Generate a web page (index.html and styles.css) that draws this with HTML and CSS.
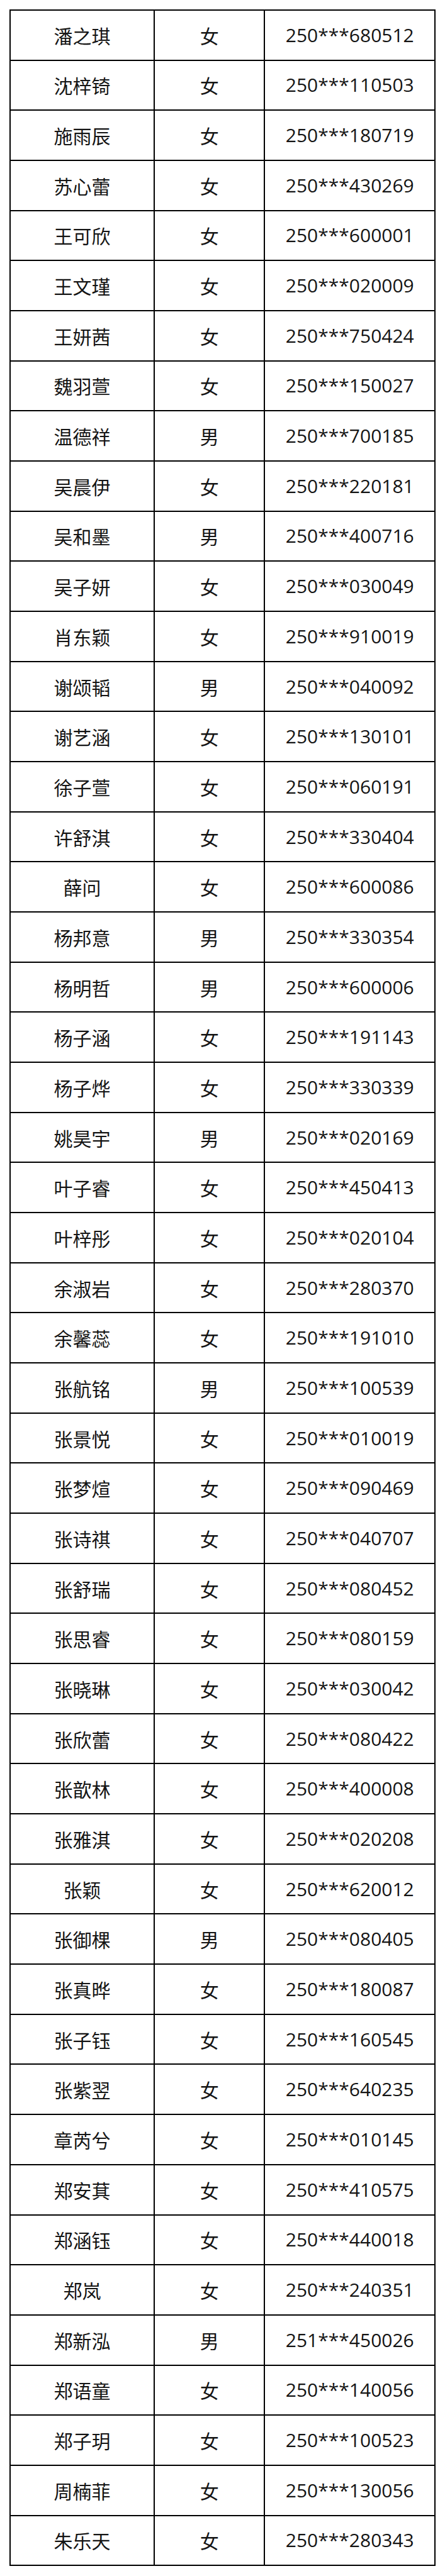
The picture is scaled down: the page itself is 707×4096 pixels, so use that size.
FILE: index.html
```html
<!DOCTYPE html>
<html lang="zh">
<head>
<meta charset="utf-8">
<title>名单</title>
<link rel="stylesheet" href="styles.css">
</head>
<body>
<div class="sheet">
<div class="c name">潘之琪</div><div class="c sex">女</div><div class="c id">250***680512</div>
<div class="c name">沈梓锜</div><div class="c sex">女</div><div class="c id">250***110503</div>
<div class="c name">施雨辰</div><div class="c sex">女</div><div class="c id">250***180719</div>
<div class="c name">苏心蕾</div><div class="c sex">女</div><div class="c id">250***430269</div>
<div class="c name">王可欣</div><div class="c sex">女</div><div class="c id">250***600001</div>
<div class="c name">王文瑾</div><div class="c sex">女</div><div class="c id">250***020009</div>
<div class="c name">王妍茜</div><div class="c sex">女</div><div class="c id">250***750424</div>
<div class="c name">魏羽萱</div><div class="c sex">女</div><div class="c id">250***150027</div>
<div class="c name">温德祥</div><div class="c sex">男</div><div class="c id">250***700185</div>
<div class="c name">吴晨伊</div><div class="c sex">女</div><div class="c id">250***220181</div>
<div class="c name">吴和墨</div><div class="c sex">男</div><div class="c id">250***400716</div>
<div class="c name">吴子妍</div><div class="c sex">女</div><div class="c id">250***030049</div>
<div class="c name">肖东颖</div><div class="c sex">女</div><div class="c id">250***910019</div>
<div class="c name">谢颂韬</div><div class="c sex">男</div><div class="c id">250***040092</div>
<div class="c name">谢艺涵</div><div class="c sex">女</div><div class="c id">250***130101</div>
<div class="c name">徐子萱</div><div class="c sex">女</div><div class="c id">250***060191</div>
<div class="c name">许舒淇</div><div class="c sex">女</div><div class="c id">250***330404</div>
<div class="c name">薛问</div><div class="c sex">女</div><div class="c id">250***600086</div>
<div class="c name">杨邦意</div><div class="c sex">男</div><div class="c id">250***330354</div>
<div class="c name">杨明哲</div><div class="c sex">男</div><div class="c id">250***600006</div>
<div class="c name">杨子涵</div><div class="c sex">女</div><div class="c id">250***191143</div>
<div class="c name">杨子烨</div><div class="c sex">女</div><div class="c id">250***330339</div>
<div class="c name">姚昊宇</div><div class="c sex">男</div><div class="c id">250***020169</div>
<div class="c name">叶子睿</div><div class="c sex">女</div><div class="c id">250***450413</div>
<div class="c name">叶梓彤</div><div class="c sex">女</div><div class="c id">250***020104</div>
<div class="c name">余淑岩</div><div class="c sex">女</div><div class="c id">250***280370</div>
<div class="c name">余馨蕊</div><div class="c sex">女</div><div class="c id">250***191010</div>
<div class="c name">张航铭</div><div class="c sex">男</div><div class="c id">250***100539</div>
<div class="c name">张景悦</div><div class="c sex">女</div><div class="c id">250***010019</div>
<div class="c name">张梦煊</div><div class="c sex">女</div><div class="c id">250***090469</div>
<div class="c name">张诗祺</div><div class="c sex">女</div><div class="c id">250***040707</div>
<div class="c name">张舒瑞</div><div class="c sex">女</div><div class="c id">250***080452</div>
<div class="c name">张思睿</div><div class="c sex">女</div><div class="c id">250***080159</div>
<div class="c name">张晓琳</div><div class="c sex">女</div><div class="c id">250***030042</div>
<div class="c name">张欣蕾</div><div class="c sex">女</div><div class="c id">250***080422</div>
<div class="c name">张歆林</div><div class="c sex">女</div><div class="c id">250***400008</div>
<div class="c name">张雅淇</div><div class="c sex">女</div><div class="c id">250***020208</div>
<div class="c name">张颖</div><div class="c sex">女</div><div class="c id">250***620012</div>
<div class="c name">张御棵</div><div class="c sex">男</div><div class="c id">250***080405</div>
<div class="c name">张真晔</div><div class="c sex">女</div><div class="c id">250***180087</div>
<div class="c name">张子钰</div><div class="c sex">女</div><div class="c id">250***160545</div>
<div class="c name">张紫翌</div><div class="c sex">女</div><div class="c id">250***640235</div>
<div class="c name">章芮兮</div><div class="c sex">女</div><div class="c id">250***010145</div>
<div class="c name">郑安萁</div><div class="c sex">女</div><div class="c id">250***410575</div>
<div class="c name">郑涵钰</div><div class="c sex">女</div><div class="c id">250***440018</div>
<div class="c name">郑岚</div><div class="c sex">女</div><div class="c id">250***240351</div>
<div class="c name">郑新泓</div><div class="c sex">男</div><div class="c id">251***450026</div>
<div class="c name">郑语童</div><div class="c sex">女</div><div class="c id">250***140056</div>
<div class="c name">郑子玥</div><div class="c sex">女</div><div class="c id">250***100523</div>
<div class="c name">周楠菲</div><div class="c sex">女</div><div class="c id">250***130056</div>
<div class="c name">朱乐天</div><div class="c sex">女</div><div class="c id">250***280343</div>
</div>
</body>
</html>
```
FILE: styles.css
```css
html, body {
  margin: 0;
  padding: 0;
  background: #ffffff;
}
body {
  padding: 14.94px 0 0 14.94px;
}
.sheet {
  display: grid;
  grid-template-columns: 227.1px 173.3px 268.9px;
  grid-auto-rows: 77.68px;
  gap: 2px;
  padding: 2px;
  width: max-content;
  background: #000000;
}
.c {
  background: #ffffff;
  display: flex;
  align-items: center;
  justify-content: center;
  color: #141414;
  font-family: "Noto Sans CJK SC", "Open Sans", sans-serif;
  font-size: 30px;
  line-height: 1;
}
.id {
  font-family: "Open Sans", "Noto Sans CJK SC", sans-serif;
  font-size: 30px;
}
```
